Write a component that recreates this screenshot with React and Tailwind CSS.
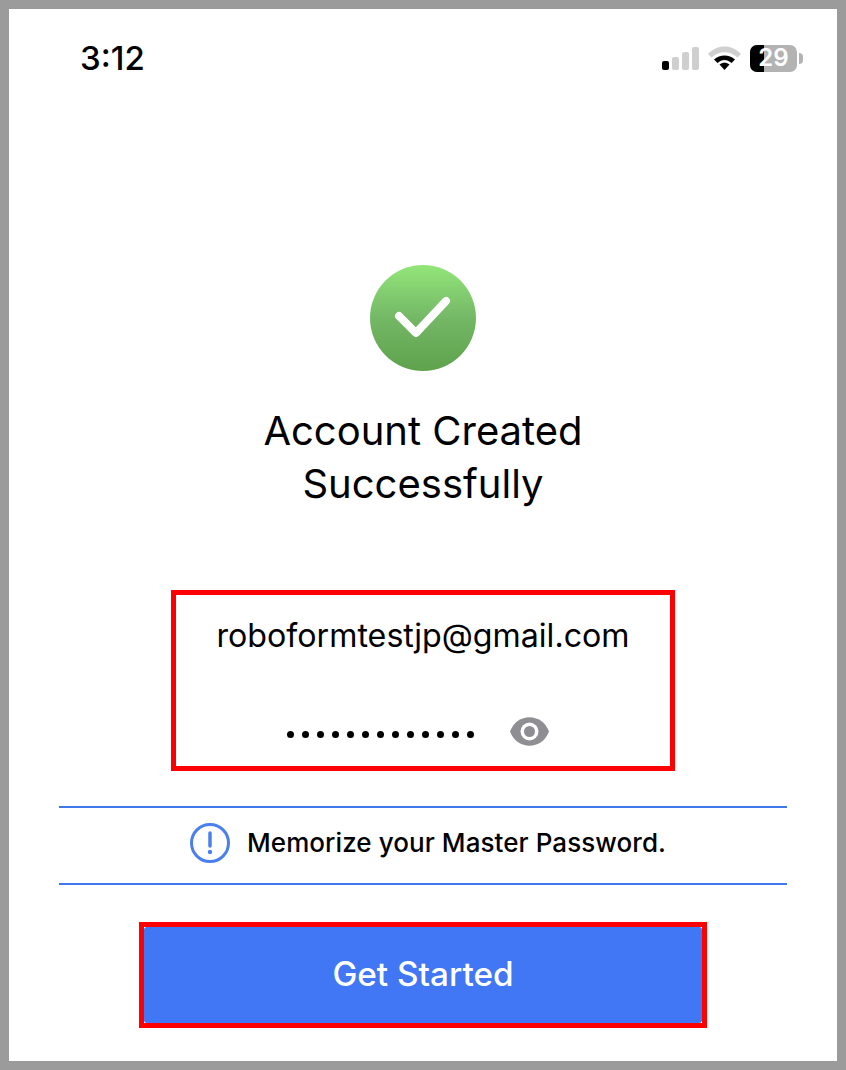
const FONT = "font-['Inter',sans-serif]";

const SignalIcon = () => (
  <svg width="37" height="23" viewBox="0 0 37 23" className="block">
    <rect x="0" y="14" width="7" height="9" rx="2" fill="#000" />
    <rect x="10" y="10" width="7" height="13" rx="2" fill="#cfcfcf" />
    <rect x="20" y="5" width="7" height="18" rx="2" fill="#cfcfcf" />
    <rect x="30" y="0" width="7" height="23" rx="2" fill="#cfcfcf" />
  </svg>
);

const WifiIcon = () => (
  <svg width="33" height="24" viewBox="0 0 33 24" className="block">
    <path d="M0 8 C9 -2 24 -2 33 8 L29.500 11.500 C22 4.500 11 4.500 3.500 11.500 Z" fill="#cfcfcf" />
    <path d="M6 13.500 C12 8 21 8 27 13.500 L23.500 17 C19 13 14 13 9.500 17 Z" fill="#000" />
    <path d="M11.500 18.500 C14.500 16 18.500 16 21.500 18.500 L16.500 24 Z" fill="#000" />
  </svg>
);

const Battery = () => (
  <div className="flex items-center">
    <div className="relative h-[27px] w-[47px] overflow-hidden rounded-[7px] bg-[#b3b3b3]">
      <div className="h-full w-[14px] bg-black" />
      <span className="absolute inset-0 flex items-center justify-center text-[24px] font-semibold leading-none text-white">
        29
      </span>
    </div>
    <div className="ml-[2px] h-[11px] w-[4px] rounded-r-full bg-[#b3b3b3]" />
  </div>
);

const StatusBar = () => (
  <div className="flex h-[98px] items-center justify-between pl-[71px] pr-[34px]">
    <span className="text-[33px] font-medium leading-[36px] text-black">3:12</span>
    <div className="flex items-center gap-[9px]">
      <SignalIcon />
      <WifiIcon />
      <Battery />
    </div>
  </div>
);

const CheckBadge = () => (
  <div className="flex h-[106px] w-[106px] items-center justify-center rounded-full bg-gradient-to-b from-[#93e679] via-[#74b866] to-[#5ea24c]">
    <svg width="60" height="46" viewBox="0 0 60 46" fill="none">
      <path d="M6 21 L23 38 L53 6" stroke="#fff" strokeWidth="8" strokeLinecap="round" strokeLinejoin="round" />
    </svg>
  </div>
);

const EyeIcon = () => (
  <svg width="39" height="29" viewBox="0 0 39 29" className="block">
    <path d="M0 14.500 C7 -4.500 32 -4.500 39 14.500 C32 33.500 7 33.500 0 14.500 Z" fill="#8e8e93" />
    <circle cx="19.500" cy="14.500" r="9" fill="#fff" />
    <circle cx="19.500" cy="14.500" r="5.500" fill="#8e8e93" />
  </svg>
);

const AlertIcon = () => (
  <svg width="40" height="40" viewBox="0 0 40 40" fill="none" className="block">
    <circle cx="20" cy="20" r="18.500" stroke="#4a80ee" strokeWidth="3" />
    <path d="M20 10 L20 23" stroke="#4a80ee" strokeWidth="3.500" strokeLinecap="round" />
    <circle cx="20" cy="29" r="2.200" fill="#4a80ee" />
  </svg>
);

export default function App() {
  const dots = Array.from({ length: 13 });

  return (
    <div className={`h-[1070px] w-[846px] bg-[#9b9b9b] p-[9px] ${FONT}`}>
      <div className="flex h-full w-full flex-col bg-white">
        <StatusBar />

        <div className="mt-[158px] flex flex-col items-center">
          <CheckBadge />
          <h1 className="mt-[33px] text-center text-[40px] font-normal leading-[53px] text-black">
            Account Created
            <br />
            Successfully
          </h1>

          <div className="mt-[80px] flex h-[181px] w-[504px] flex-col items-center border-[5px] border-[#ff0000]">
            <p className="mt-[20px] text-[32.2px] leading-[42px] text-black">roboformtestjp@gmail.com</p>
            <div className="mr-[11px] mt-[60px] flex items-center">
              <div className="mt-[6px] flex gap-[8px]">
                {dots.map((_, i) => (
                  <span key={i} className="h-[7px] w-[7px] rounded-full bg-black" />
                ))}
              </div>
              <div className="ml-[36px]">
                <EyeIcon />
              </div>
            </div>
          </div>

          <div className="mt-[35px] flex h-[79px] w-[728px] items-center justify-center gap-[17px] border-y-2 border-[#4177ee] pb-[5px] pl-[10px]">
            <AlertIcon />
            <span className="text-[26px] font-medium leading-none tracking-[0.07px] text-black">Memorize your Master Password.</span>
          </div>

          <button className="mt-[37px] flex h-[106px] w-[568px] border-[5px] border-[#ff0000] bg-white">
            <span className="flex h-full w-full items-center justify-center rounded-[3px] bg-[#4176f5] text-[33.3px] font-[550] text-white">
              Get Started
            </span>
          </button>
        </div>
      </div>
    </div>
  );
}
